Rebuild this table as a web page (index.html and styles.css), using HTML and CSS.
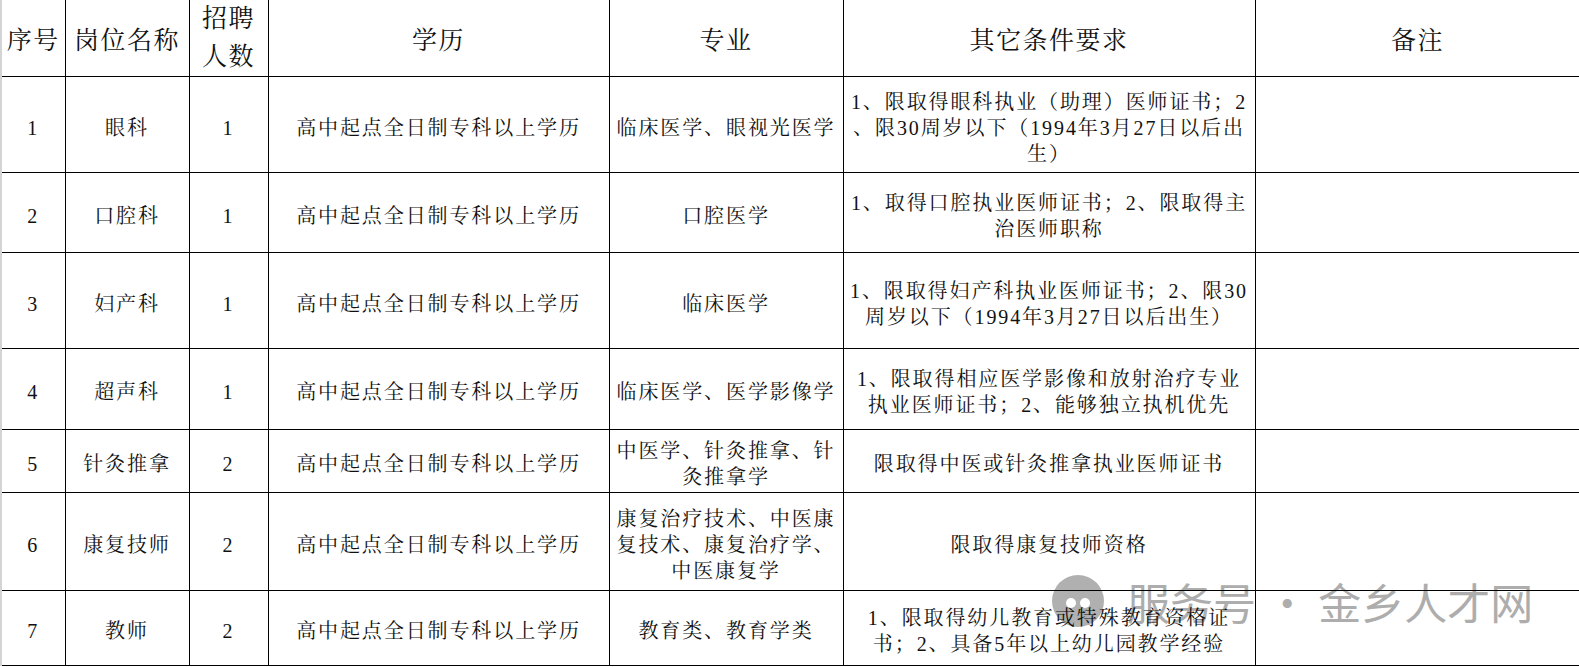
FILE: index.html
```html
<!DOCTYPE html>
<html lang="zh-CN">
<head>
<meta charset="utf-8">
<title>招聘岗位表</title>
<link rel="stylesheet" href="styles.css">
</head>
<body>
<div class="sheet">
  <table class="jobs">
    <colgroup>
      <col class="c-no">
      <col class="c-name">
      <col class="c-num">
      <col class="c-edu">
      <col class="c-major">
      <col class="c-req">
      <col class="c-note">
    </colgroup>
    <thead>
      <tr class="h">
        <th>序号</th>
        <th>岗位名称</th>
        <th class="two">招聘<br>人数</th>
        <th>学历</th>
        <th>专业</th>
        <th>其它条件要求</th>
        <th class="note">备注</th>
      </tr>
    </thead>
    <tbody>
      <tr class="r1">
        <td>1</td><td>眼科</td><td>1</td>
        <td>高中起点全日制专科以上学历</td>
        <td>临床医学、眼视光医学</td>
        <td>1、限取得眼科执业（助理）医师证书；2<br>、限30周岁以下（1994年3月27日以后出<br>生）</td>
        <td></td>
      </tr>
      <tr class="r2">
        <td>2</td><td>口腔科</td><td>1</td>
        <td>高中起点全日制专科以上学历</td>
        <td>口腔医学</td>
        <td>1、取得口腔执业医师证书；2、限取得主<br>治医师职称</td>
        <td></td>
      </tr>
      <tr class="r3">
        <td>3</td><td>妇产科</td><td>1</td>
        <td>高中起点全日制专科以上学历</td>
        <td>临床医学</td>
        <td>1、限取得妇产科执业医师证书；2、限30<br>周岁以下（1994年3月27日以后出生）</td>
        <td></td>
      </tr>
      <tr class="r4">
        <td>4</td><td>超声科</td><td>1</td>
        <td>高中起点全日制专科以上学历</td>
        <td>临床医学、医学影像学</td>
        <td>1、限取得相应医学影像和放射治疗专业<br>执业医师证书；2、能够独立执机优先</td>
        <td></td>
      </tr>
      <tr class="r5">
        <td>5</td><td>针灸推拿</td><td>2</td>
        <td>高中起点全日制专科以上学历</td>
        <td>中医学、针灸推拿、针<br>灸推拿学</td>
        <td>限取得中医或针灸推拿执业医师证书</td>
        <td></td>
      </tr>
      <tr class="r6">
        <td>6</td><td>康复技师</td><td>2</td>
        <td>高中起点全日制专科以上学历</td>
        <td>康复治疗技术、中医康<br>复技术、康复治疗学、<br>中医康复学</td>
        <td>限取得康复技师资格</td>
        <td></td>
      </tr>
      <tr class="r7">
        <td>7</td><td>教师</td><td>2</td>
        <td>高中起点全日制专科以上学历</td>
        <td>教育类、教育学类</td>
        <td>1、限取得幼儿教育或特殊教育资格证<br>书；2、具备5年以上幼儿园教学经验</td>
        <td></td>
      </tr>
    </tbody>
  </table>

  <div class="watermark" aria-hidden="true">
    <svg class="wm-icon" viewBox="0 0 52 52" width="52" height="52">
      <circle cx="26" cy="26" r="26" fill="#b0b0b0"/>
      <circle cx="19" cy="28" r="5" fill="#ffffff"/>
      <circle cx="33" cy="28" r="5" fill="#ffffff"/>
    </svg>
    <span class="wm-text">服务号 · 金乡人才网</span>
  </div>
</div>
</body>
</html>
```

FILE: styles.css
```css
html, body {
  margin: 0;
  padding: 0;
  background: #ffffff;
  overflow: hidden;
}

.sheet {
  position: relative;
  width: 1620px;
  border-left: 2px solid #d4d4d4;
  font-family: "Liberation Serif", "Noto Serif CJK SC", "Noto Sans CJK SC", serif;
  color: #111111;
}

.jobs {
  position: relative;
  z-index: 1;
  border-collapse: collapse;
  table-layout: fixed;
  width: 1618px;
  background: transparent;
}

.c-no { width: 63px; }
.c-name { width: 124px; }
.c-num { width: 79px; }
.c-edu { width: 341px; }
.c-major { width: 234px; }
.c-req { width: 412px; }
.c-note { width: 365px; }

.jobs th,
.jobs td {
  border: 1px solid #000000;
  text-align: center;
  vertical-align: middle;
  white-space: nowrap;
  padding: 0 2px;
}

.jobs tr > :first-child { border-left: none; }
.jobs thead th { border-top: none; }

.jobs th {
  font-weight: normal;
  font-size: 25px;
  letter-spacing: 1.5px;
  line-height: 34px;
  padding-top: 6px;
}

.jobs th.two {
  line-height: 38px;
  padding-top: 0;
}

.jobs th.note {
  padding-right: 42px;
}

.h { height: 76px; }

.jobs td {
  font-size: 20px;
  letter-spacing: 1.9px;
  line-height: 26px;
  padding-top: 6px;
}

.r1 { height: 96px; }
.r2 { height: 80px; }
.r3 { height: 96px; }
.r4 { height: 81px; }
.r5 { height: 63px; }
.r6 { height: 98px; }
.r7 { height: 75px; }

.watermark {
  position: absolute;
  left: 1050px;
  top: 575px;
  z-index: 0;
  display: flex;
  align-items: center;
  gap: 23px;
  pointer-events: none;
}

.wm-icon { display: block; }

.wm-text {
  font-family: "Noto Sans CJK SC", sans-serif;
  font-size: 43px;
  line-height: 52px;
  color: #adadad;
  white-space: nowrap;
}
```
